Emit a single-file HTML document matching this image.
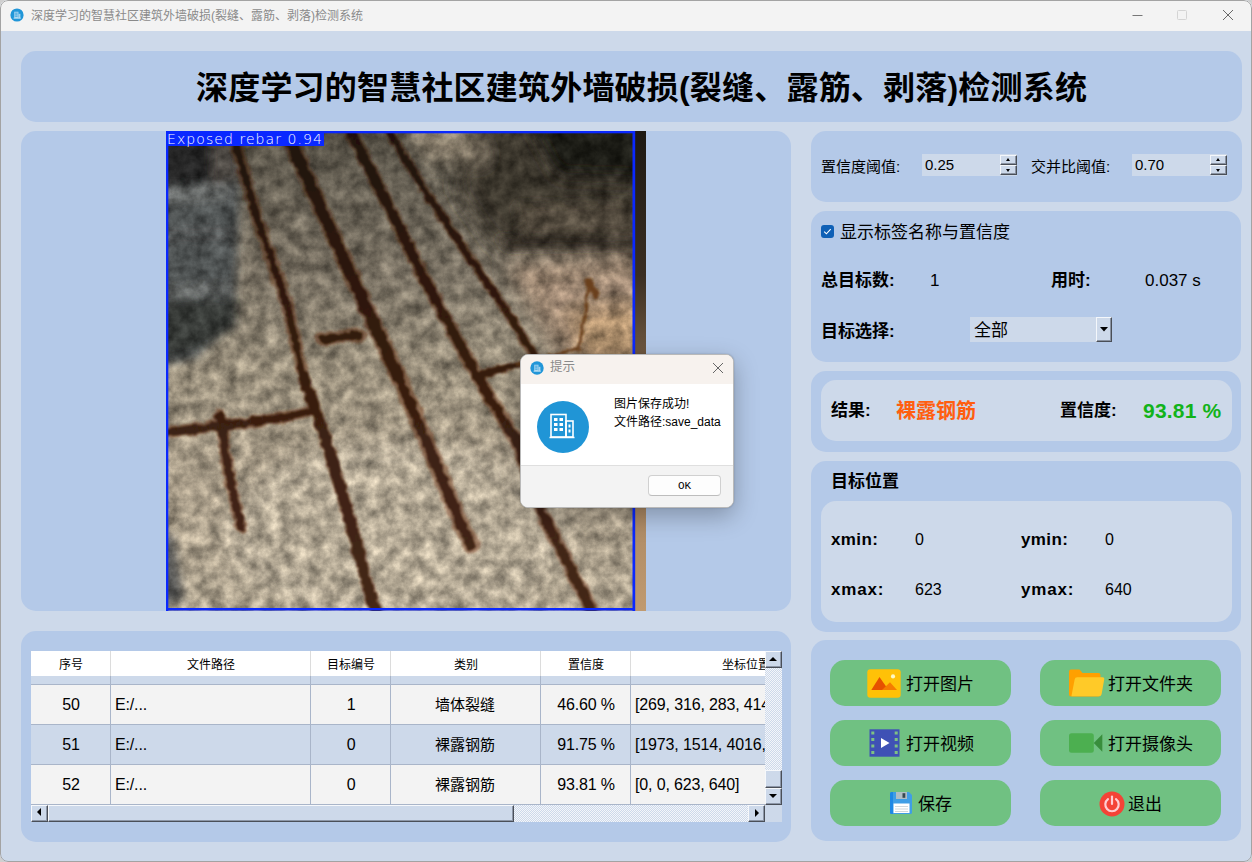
<!DOCTYPE html>
<html lang="zh-CN">
<head>
<meta charset="utf-8">
<title>深度学习的智慧社区建筑外墙破损(裂缝、露筋、剥落)检测系统</title>
<style>
*{box-sizing:border-box;margin:0;padding:0}
html,body{width:1252px;height:862px;overflow:hidden;background:#cfcfcf}
body{font-family:"Liberation Sans","Noto Sans CJK SC",sans-serif;color:#000;position:relative}
.abs{position:absolute}
#win{position:absolute;left:0;top:0;width:1252px;height:862px;background:#cdd9ea;border-radius:8px;overflow:hidden}
#winb{position:absolute;left:0;top:0;width:1252px;height:862px;border:1px solid #a3a3a3;border-radius:8px;z-index:50}
#tbar{position:absolute;left:0;top:0;width:1252px;height:31px;background:#f3f3f3}
#tbar .ttl{position:absolute;left:31px;top:1px;height:30px;line-height:30px;font-size:12px;color:#8a8a8a;white-space:nowrap}
.panel{position:absolute;background:#b4c9e8;border-radius:15px}
.inner{position:absolute;background:#cdd9ea;border-radius:15px}
.t{position:absolute;white-space:nowrap;line-height:1}
.b{font-weight:bold}

.spin{position:absolute;width:95px;height:22px;background:#cdd9ea}
.spin span{position:absolute;left:3px;top:0;line-height:22px;font-size:15px}
.spin i{position:absolute;left:78px;width:17px;height:10px;background:#cdd9ea;border-left:1px solid #f4f7fb;border-top:1px solid #f4f7fb;border-right:1px solid #4a4f57;border-bottom:1px solid #4a4f57;box-shadow:inset -1px -1px 0 #8a93a2}
.spin i.up{top:1px}.spin i.dn{top:11px}
.spin i.up:after{content:"";position:absolute;left:5px;top:2px;border:2px solid transparent;border-top:0;border-bottom:3px solid #000}
.spin i.dn:after{content:"";position:absolute;left:5px;top:3px;border:2px solid transparent;border-bottom:0;border-top:3px solid #000}
.combo{position:absolute;width:142px;height:25px;background:#cdd9ea}
.combo span{position:absolute;left:4px;top:1px;line-height:25px;font-size:17px}
.combo i{position:absolute;left:126px;top:0;width:16px;height:25px;background:#cdd9ea;border-left:1px solid #f4f7fb;border-top:1px solid #f4f7fb;border-right:1px solid #4a4f57;border-bottom:1px solid #4a4f57;box-shadow:inset -1px -1px 0 #8a93a2}
.combo i:after{content:"";position:absolute;left:3px;top:9px;width:8px;height:4.5px;background:#000;clip-path:polygon(0 0,100% 0,50% 100%)}
.btn{position:absolute;width:181px;height:46px;border-radius:15px;background:#70c182}

.th{position:absolute;top:2px;height:25px;line-height:25px;font-size:12px;text-align:center;white-space:nowrap}
.tr{position:absolute;left:0;width:734px;height:40px;border-bottom:1px solid #a9b5c9}
.tr span{position:absolute;top:0;height:39px;line-height:39px;font-size:16px;letter-spacing:-0.15px;white-space:nowrap;overflow:hidden}
.dots{background-color:#e4e9f1;background-image:conic-gradient(#cdd9ea 25%,#f4f6fa 0 50%,#cdd9ea 0 75%,#f4f6fa 0);background-size:2px 2px}
.sbb{position:absolute;width:17px;height:17px;background:#cdd9ea;border-left:1px solid #f6f8fb;border-top:1px solid #f6f8fb;border-right:1px solid #4a4f58;border-bottom:1px solid #4a4f58;box-shadow:inset -1px -1px 0 #8d97a8}
.sbb b{position:absolute;width:0;height:0;border:4px solid transparent}
.sbb .au{left:3px;top:5px;border-top:0;border-bottom:4px solid #000}
.sbb .ad{left:3px;top:5px;border-bottom:0;border-top:4px solid #000}
.sbb .al{left:5px;top:2px;border-left:0;border-right:4px solid #000}
.sbb .ar{left:6px;top:3px;border-right:0;border-left:4px solid #000}
.tr span.cj{font-size:15px;letter-spacing:0;padding-right:2px}
</style>
</head>
<body>
<div id="win">
  <div id="winb"></div>
  <div id="tbar">
    <svg class="abs" style="left:10px;top:8px" width="14" height="14" viewBox="0 0 14 14"><circle cx="7" cy="7" r="6.6" fill="#2196d8"/><rect x="4.200" y="3.700" width="4.300" height="6.300" fill="#9fd2ef"/><rect x="8.500" y="5.800" width="1.900" height="4.200" fill="#9fd2ef"/><path d="M5.200 5.200h2.300M5.200 6.800h2.300M5.200 8.300h2.300" stroke="#2196d8" stroke-width="0.700"/><path d="M3.600 10.200h7.200" stroke="#e8f4fb" stroke-width="0.800"/></svg>
    <div class="ttl">深度学习的智慧社区建筑外墙破损(裂缝、露筋、剥落)检测系统</div>
    <svg class="abs" style="left:1121px;top:0px" width="130" height="30" viewBox="0 0 130 30"><path d="M11.5 15.5h10" stroke="#777" stroke-width="1" fill="none"/><rect x="56.500" y="10.500" width="9" height="9" rx="1" fill="none" stroke="#d4d4d4" stroke-width="1"/><path d="M102 10l10 10M112 10l-10 10" stroke="#686868" stroke-width="1" fill="none"/></svg>
  </div>

  <!-- title panel -->
  <div class="panel" style="left:21px;top:51px;width:1221px;height:71px"></div>
  <div class="t b" id="maintitle" style="left:196px;top:51px;height:71px;line-height:75px;font-size:32px;letter-spacing:0.2px">深度学习的智慧社区建筑外墙破损(裂缝、露筋、剥落)检测系统</div>

  <!-- image panel -->
  <div class="panel" id="imgpanel" style="left:21px;top:131px;width:770px;height:480px"></div>

  <!-- photo -->
  <div id="photo" class="abs" style="left:166px;top:131px;width:480px;height:480px;background:#8d857a;overflow:hidden">
  <!--PHOTO--><svg class="abs" style="left:0;top:0" width="480" height="480" viewBox="0 0 480 480">
<defs>
<linearGradient id="vg" x1="0" y1="0" x2="0" y2="1">
 <stop offset="0" stop-color="#575247"/><stop offset="0.12" stop-color="#645e52"/><stop offset="0.3" stop-color="#797163"/><stop offset="0.5" stop-color="#988e7b"/><stop offset="0.75" stop-color="#a99d89"/><stop offset="1" stop-color="#ada28e"/>
</linearGradient>
<linearGradient id="rb" gradientUnits="userSpaceOnUse" x1="0" y1="0" x2="0" y2="480">
 <stop offset="0" stop-color="#1f1109"/><stop offset="0.4" stop-color="#311a0e"/><stop offset="0.7" stop-color="#3e2213"/><stop offset="1" stop-color="#442718"/>
</linearGradient>
<linearGradient id="rh" gradientUnits="userSpaceOnUse" x1="0" y1="0" x2="0" y2="480">
 <stop offset="0" stop-color="#4a2c18"/><stop offset="0.5" stop-color="#744428"/><stop offset="1" stop-color="#86553a"/>
</linearGradient>
<linearGradient id="rs" x1="0" y1="0" x2="0" y2="1">
 <stop offset="0" stop-color="#1d1812"/><stop offset="0.3" stop-color="#3a2e22"/><stop offset="0.6" stop-color="#9a7a58"/><stop offset="1" stop-color="#c09a70"/>
</linearGradient>
<filter id="bl" x="-20%" y="-20%" width="140%" height="140%"><feGaussianBlur stdDeviation="9"/></filter>
<filter id="bs" x="-20%" y="-20%" width="140%" height="140%"><feGaussianBlur stdDeviation="4"/></filter>
<filter id="rough" x="-10%" y="-10%" width="120%" height="120%"><feTurbulence type="fractalNoise" baseFrequency="0.12" numOctaves="2" seed="3" result="n"/><feDisplacementMap in="SourceGraphic" in2="n" scale="6" xChannelSelector="R" yChannelSelector="G"/><feGaussianBlur stdDeviation="0.8"/></filter>
<filter id="tex" x="0" y="0" width="100%" height="100%" color-interpolation-filters="sRGB">
 <feTurbulence type="fractalNoise" baseFrequency="0.07" numOctaves="5" seed="8" result="t"/>
 <feColorMatrix in="t" type="matrix" values="0.8 0 0 0 0.1  0.8 0 0 0 0.1  0.8 0 0 0 0.1  0 0 0 0 1" result="g"/>
 <feComposite in="SourceGraphic" in2="g" operator="arithmetic" k1="1" k2="0.5" k3="0.12" k4="-0.06"/>
</filter>
</defs>
<g filter="url(#tex)">
<rect width="480" height="480" fill="url(#vg)"/>
<g filter="url(#bl)">
 <ellipse cx="230" cy="400" rx="170" ry="90" fill="#b3a894"/>
 <!-- top right dark -->
 <path d="M300 -30L520 -30L520 122L400 118L330 116L290 60Z" fill="#3d372e"/>
 <path d="M350 -30L520 -30L520 50L390 46Z" fill="#1f1d19"/>
 <path d="M230 -20L300 -20L320 30L260 30Z" fill="#857a69"/>
 <!-- right mid lighter smooth -->
 <path d="M340 134L500 122L500 240L400 240Z" fill="#9a8470"/>
 <path d="M400 180L500 170L500 240L420 240Z" fill="#aa8c6a"/>
</g>
<g filter="url(#bs)">
 <path d="M350 74L480 70L480 102L356 104Z" fill="#4f463b"/>
 <path d="M330 106L480 104L480 116L340 118Z" fill="#362e26"/>
 <!-- top left dark -->
 <path d="M-30 -10L70 -10L74 60L70 150L66 195L30 228L-30 240Z" fill="#4e5151"/>
 <path d="M-30 -10L46 -10L48 52L-30 56Z" fill="#262626"/>
 <path d="M44 -10L70 -10L72 52L46 54Z" fill="#48453f"/>
 <path d="M-20 58L68 52L68 68L-20 76Z" fill="#686b69"/>
 <path d="M-20 102L66 98L66 106L-20 110Z" fill="#5e6060"/>
 <path d="M-20 156L64 150L64 162L-20 168Z" fill="#646665"/>
 <path d="M-20 170L72 166L70 196L28 222L-20 232Z" fill="#383a39"/>
 <path d="M-20 395L8 405L18 470L-20 480Z" fill="#5a5a58"/>
</g>
</g>
<g filter="url(#rough)" fill="none" stroke-linecap="round" stroke-linejoin="round">
 <g stroke="url(#rh)" opacity="0.6">
  <path d="M70 14L92 90L120 170L137 244L157 300L184 389L210 484" stroke-width="13"/>
  <path d="M122 4L160 89L193 161L232 245L266 323L293 389L305 414" stroke-width="17"/>
  <path d="M182 -4L221 72L257 145L299 223L321 262L352 312L374 378L427 482" stroke-width="14"/>
  <path d="M220 -4L260 61L299 120L332 167L360 211L372 230" stroke-width="10"/>
  <path d="M-4 302L52 295L110 288L150 279" stroke-width="12"/>
  <path d="M54 284L64 350L75 396" stroke-width="12"/>
  <path d="M156 208L194 204" stroke-width="14"/>
  <path d="M308 245L352 234" stroke-width="9"/>
 </g>
 <g stroke="url(#rb)">
  <path d="M70 14L92 90L120 170L137 244" stroke-width="7.200"/>
  <path d="M137 244L157 300L184 389L210 484" stroke-width="10.700"/>
  <path d="M122 4L160 89L193 161L232 245" stroke-width="11.700"/>
  <path d="M232 245L266 323L293 389L305 414" stroke-width="10.200"/>
  <path d="M182 -4L221 72L257 145L299 223L321 262L352 312L374 378L427 482" stroke-width="9.700"/>
  <path d="M220 -4L260 61L299 120L332 167L360 211L372 230" stroke-width="6.700"/>
  <path d="M-4 302L52 295L110 288L150 279" stroke-width="8.700"/>
  <path d="M54 284L64 350L75 396" stroke-width="8.700"/>
  <path d="M158 208L192 204" stroke-width="9.200"/>
  <path d="M308 245L352 234" stroke-width="7.200"/>
 </g>
 <g stroke="#6a3f1c">
  <path d="M422 149L419 184L413 217" stroke-width="3"/>
  <path d="M352 234L413 217" stroke-width="3"/>
  <path d="M423 150L429 164" stroke-width="7"/>
 </g>
</g>
<!-- right strip beyond box -->
<rect x="469" y="0" width="11" height="480" fill="url(#rs)"/>
<rect x="466.500" y="0" width="2.700" height="480" fill="#0a28ff"/>
<rect x="0" y="0" width="2.300" height="480" fill="#0a28ff"/>
<rect x="0" y="0" width="469" height="2.300" fill="#0a28ff"/>
<rect x="0" y="477" width="469" height="2.500" fill="#0a28ff"/>
<rect x="0" y="0" width="158" height="15" fill="#0a28ff"/>
<text x="1" y="12.500" font-family="'DejaVu Sans','Liberation Sans',sans-serif" font-weight="200" font-size="14" fill="#fff" textLength="155" lengthAdjust="spacing">Exposed rebar 0.94</text>
</svg>
<!--/PHOTO-->
  </div>

  <!-- dialog -->
  <div id="dlg" class="abs" style="left:520px;top:354px;width:214px;height:154px;border-radius:8px;background:#fff;border:1px solid #b9b9b9;box-shadow:0 8px 24px rgba(0,0,0,0.28),0 0 2px rgba(0,0,0,0.2);overflow:hidden">
    <div class="abs" style="left:0;top:0;width:212px;height:29px;background:#f7f2ee"></div>
    <svg class="abs" style="left:9px;top:6px" width="14" height="14" viewBox="0 0 14 14"><circle cx="7" cy="7" r="6.700" fill="#2196d8"/><rect x="4.200" y="3.700" width="4.300" height="6.300" fill="#9fd2ef"/><rect x="8.500" y="5.800" width="1.900" height="4.200" fill="#9fd2ef"/><path d="M5.200 5.200h2.300M5.200 6.800h2.300M5.200 8.300h2.300" stroke="#2196d8" stroke-width="0.700"/><path d="M3.600 10.200h7.200" stroke="#e8f4fb" stroke-width="0.800"/></svg>
    <div class="t" style="left:29px;top:6px;font-size:12.500px;color:#8a8a8a">提示</div>
    <svg class="abs" style="left:191px;top:7px" width="12" height="12" viewBox="0 0 12 12"><path d="M1 1l10 10M11 1L1 11" stroke="#666" stroke-width="1" fill="none"/></svg>
    <svg class="abs" style="left:15px;top:45px" width="54" height="54" viewBox="0 0 54 54"><circle cx="27" cy="27" r="26" fill="#2095d6"/><g transform="translate(-1,-1)"><path d="M14.500 38.500h25" stroke="#fff" stroke-width="1.600"/><rect x="16" y="15.500" width="15" height="22.500" fill="none" stroke="#fff" stroke-width="1.600"/><rect x="31" y="22" width="7" height="16" fill="none" stroke="#fff" stroke-width="1.600"/><g fill="#fff"><rect x="19" y="19" width="3.500" height="3"/><rect x="24.500" y="19" width="3.500" height="3"/><rect x="19" y="24" width="3.500" height="3"/><rect x="24.500" y="24" width="3.500" height="3"/><rect x="19" y="29" width="3.500" height="3"/><rect x="24.500" y="29" width="3.500" height="3"/><rect x="33.500" y="25.500" width="2" height="3"/><rect x="33.500" y="30.500" width="2" height="3"/></g></g></svg>
    <div class="t" style="left:93px;top:41px;font-size:12px;line-height:17.500px">图片保存成功!<br>文件路径:save_data</div>
    <div class="abs" style="left:0;top:110px;width:212px;height:44px;background:#f3f3f3;border-top:1px solid #dfdfdf"></div>
    <div class="abs" style="left:127px;top:120px;width:73px;height:21px;background:#fdfdfd;border:1px solid #d0d0d0;border-bottom-color:#bdbdbd;border-radius:4px;text-align:center;font-family:'Liberation Mono','Noto Serif CJK SC',monospace;font-size:11px;line-height:20px">OK</div>
  </div>

  <!-- table panel -->
  <div class="panel" id="tblpanel" style="left:21px;top:631px;width:770px;height:211px"></div>

  <!-- table -->
  <div id="tbl" class="abs" style="left:31px;top:651px;width:751px;height:171px;background:#cdd9ea;overflow:hidden">
   <div class="abs" style="left:0;top:0;width:734px;height:25px;background:#fff"></div>
   <div class="th" style="left:0px;width:80px">序号</div>
   <div class="th" style="left:80px;width:200px">文件路径</div>
   <div class="th" style="left:280px;width:80px">目标编号</div>
   <div class="th" style="left:360px;width:150px">类别</div>
   <div class="th" style="left:510px;width:90px">置信度</div>
   <div class="th" style="left:600px;width:230px">坐标位置</div>
   <div class="abs" style="left:0;top:25px;width:734px;height:9px;background:#cdd9ea;border-bottom:1px solid #a9b5c9"></div>
   <div class="tr" style="top:34px;background:#f3f3f3"><span style="left:0px;width:80px;text-align:center;">50</span><span style="left:80px;width:200px;text-align:left;padding-left:4px;">E:/...</span><span style="left:280px;width:80px;text-align:center;">1</span><span class="cj" style="left:360px;width:150px;text-align:center;">墙体裂缝</span><span style="left:510px;width:90px;text-align:center;">46.60 %</span><span style="left:600px;width:134px;text-align:left;padding-left:4px;">[269, 316, 283, 414]</span></div>
   <div class="tr" style="top:74px;background:#cdd9ea"><span style="left:0px;width:80px;text-align:center;">51</span><span style="left:80px;width:200px;text-align:left;padding-left:4px;">E:/...</span><span style="left:280px;width:80px;text-align:center;">0</span><span class="cj" style="left:360px;width:150px;text-align:center;">裸露钢筋</span><span style="left:510px;width:90px;text-align:center;">91.75 %</span><span style="left:600px;width:134px;text-align:left;padding-left:4px;">[1973, 1514, 4016, 2874]</span></div>
   <div class="tr" style="top:114px;background:#f3f3f3"><span style="left:0px;width:80px;text-align:center;">52</span><span style="left:80px;width:200px;text-align:left;padding-left:4px;">E:/...</span><span style="left:280px;width:80px;text-align:center;">0</span><span class="cj" style="left:360px;width:150px;text-align:center;">裸露钢筋</span><span style="left:510px;width:90px;text-align:center;">93.81 %</span><span style="left:600px;width:134px;text-align:left;padding-left:4px;">[0, 0, 623, 640]</span></div>
   <div class="abs" style="left:79px;top:0;width:1px;height:25px;background:#dcdcdc"></div>
   <div class="abs" style="left:79px;top:25px;width:1px;height:129px;background:#a9b5c9"></div>
   <div class="abs" style="left:279px;top:0;width:1px;height:25px;background:#dcdcdc"></div>
   <div class="abs" style="left:279px;top:25px;width:1px;height:129px;background:#a9b5c9"></div>
   <div class="abs" style="left:359px;top:0;width:1px;height:25px;background:#dcdcdc"></div>
   <div class="abs" style="left:359px;top:25px;width:1px;height:129px;background:#a9b5c9"></div>
   <div class="abs" style="left:509px;top:0;width:1px;height:25px;background:#dcdcdc"></div>
   <div class="abs" style="left:509px;top:25px;width:1px;height:129px;background:#a9b5c9"></div>
   <div class="abs" style="left:599px;top:0;width:1px;height:25px;background:#dcdcdc"></div>
   <div class="abs" style="left:599px;top:25px;width:1px;height:129px;background:#a9b5c9"></div>
   <div class="abs dots" style="left:734px;top:0;width:17px;height:154px"></div>
   <div class="sbb" style="left:734px;top:0"><b class="au"></b></div>
   <div class="sbb" style="left:734px;top:119px;height:18px"></div>
   <div class="sbb" style="left:734px;top:137px"><b class="ad"></b></div>
   <div class="abs dots" style="left:0;top:154px;width:734px;height:17px"></div>
   <div class="sbb" style="left:0;top:154px"><b class="al"></b></div>
   <div class="sbb" style="left:17px;top:154px;width:466px"></div>
   <div class="sbb" style="left:717px;top:154px"><b class="ar"></b></div>
  </div>

  <!-- right panels -->
  <div class="panel" style="left:811px;top:131px;width:431px;height:71px"></div>
  <div class="panel" style="left:811px;top:211px;width:430px;height:151px"></div>
  <div class="panel" style="left:811px;top:371px;width:430px;height:81px"></div>
  <div class="panel" style="left:811px;top:461px;width:430px;height:171px"></div>
  <div class="panel" style="left:811px;top:640px;width:430px;height:201px"></div>

  <!-- thresholds -->
  <div class="t" style="left:821px;top:159px;font-size:15px">置信度阈值:</div>
  <div class="spin" style="left:922px;top:154px"><span>0.25</span><i class="up"></i><i class="dn"></i></div>
  <div class="t" style="left:1031px;top:159px;font-size:15px">交并比阈值:</div>
  <div class="spin" style="left:1132px;top:154px"><span>0.70</span><i class="up"></i><i class="dn"></i></div>

  <!-- stats -->
  <div class="abs" style="left:821px;top:225px;width:13px;height:13px;background:#0f60b6;border-radius:3px"><svg width="13" height="13" viewBox="0 0 13 13" style="display:block"><path d="M3.2 6.6l2.2 2.2 4.3-4.6" fill="none" stroke="#fff" stroke-width="1.1"/></svg></div>
  <div class="t" style="left:840px;top:224px;font-size:17px">显示标签名称与置信度</div>
  <div class="t b" style="left:821px;top:272px;font-size:17px">总目标数:</div>
  <div class="t" style="left:930px;top:272px;font-size:17px">1</div>
  <div class="t b" style="left:1051px;top:272px;font-size:17px">用时:</div>
  <div class="t" style="left:1145px;top:272px;font-size:17px">0.037 s</div>
  <div class="t b" style="left:821px;top:323px;font-size:17px">目标选择:</div>
  <div class="combo" style="left:970px;top:317px"><span>全部</span><i></i></div>

  <!-- result -->
  <div class="inner" style="left:821px;top:380px;width:411px;height:61px"></div>
  <div class="t b" style="left:831px;top:402px;font-size:17px">结果:</div>
  <div class="t b" style="left:896px;top:401px;font-size:20px;color:#ff5e10">裸露钢筋</div>
  <div class="t b" style="left:1060px;top:402px;font-size:17px">置信度:</div>
  <div class="t b" style="left:1143px;top:400px;font-size:21px;letter-spacing:0.2px;color:#12b31a">93.81 %</div>

  <!-- position -->
  <div class="t b" style="left:831px;top:473px;font-size:17px">目标位置</div>
  <div class="inner" style="left:821px;top:501px;width:411px;height:121px"></div>
  <div class="t b" style="left:831px;top:531px;font-size:17px;letter-spacing:0.4px">xmin:</div>
  <div class="t" style="left:915px;top:532px;font-size:16px">0</div>
  <div class="t b" style="left:1021px;top:531px;font-size:17px;letter-spacing:0.4px">ymin:</div>
  <div class="t" style="left:1105px;top:532px;font-size:16px">0</div>
  <div class="t b" style="left:831px;top:581px;font-size:17px;letter-spacing:0.8px">xmax:</div>
  <div class="t" style="left:915px;top:582px;font-size:16px">623</div>
  <div class="t b" style="left:1021px;top:581px;font-size:17px;letter-spacing:0.8px">ymax:</div>
  <div class="t" style="left:1105px;top:582px;font-size:16px">640</div>

  <!-- buttons -->
  <div class="btn" style="left:830px;top:660px"></div>
  <div class="btn" style="left:1040px;top:660px"></div>
  <div class="btn" style="left:830px;top:720px"></div>
  <div class="btn" style="left:1040px;top:720px"></div>
  <div class="btn" style="left:830px;top:780px"></div>
  <div class="btn" style="left:1040px;top:780px"></div>
  <div class="t" style="left:906px;top:676px;font-size:17px">打开图片</div>
  <div class="t" style="left:1108px;top:676px;font-size:17px">打开文件夹</div>
  <div class="t" style="left:906px;top:736px;font-size:17px">打开视频</div>
  <div class="t" style="left:1108px;top:736px;font-size:17px">打开摄像头</div>
  <div class="t" style="left:918px;top:796px;font-size:17px">保存</div>
  <div class="t" style="left:1128px;top:796px;font-size:17px">退出</div>
  <!-- icons -->
  <svg class="abs" style="left:867px;top:669px" width="34" height="29" viewBox="0 0 34 29"><rect x="0.300" y="0.300" width="33.400" height="28.400" rx="3" fill="#ffc107"/><path d="M4.300 21l8.200-13 9 13z" fill="#e65100"/><path d="M15 21l8-7.800 7 7.800z" fill="#f57c00"/><circle cx="26" cy="7.400" r="2.100" fill="#fff9c4"/></svg>
  <svg class="abs" style="left:1068.300px;top:668px" width="37" height="29" viewBox="0 0 37 29"><path d="M1 3.500a2 2 0 0 1 2-2h8.500l3 3.500h16a2 2 0 0 1 2 2v19.500a2 2 0 0 1-2 2h-27.500a2 2 0 0 1-2-2z" fill="#ffa000"/><path d="M6.700 11.300a2.500 2.500 0 0 1 2.400-2h25.300a1.800 1.800 0 0 1 1.800 2.200l-2.600 14.700a2.500 2.500 0 0 1-2.400 2h-27.800z" fill="#ffca28"/></svg>
  <svg class="abs" style="left:868.500px;top:729px" width="31" height="28" viewBox="0 0 31 28"><rect x="0.500" y="0.300" width="30" height="27.400" fill="#3f51b5"/><g fill="#7fc283"><rect x="2.300" y="2.500" width="3" height="3"/><rect x="2.300" y="9" width="3" height="3"/><rect x="2.300" y="15.500" width="3" height="3"/><rect x="2.300" y="22" width="3" height="3"/><rect x="25.700" y="2.500" width="3" height="3"/><rect x="25.700" y="9" width="3" height="3"/><rect x="25.700" y="15.500" width="3" height="3"/><rect x="25.700" y="22" width="3" height="3"/></g><path d="M12 9l8.500 5-8.500 5z" fill="#fff"/></svg>
  <svg class="abs" style="left:1068.300px;top:732px" width="36" height="22" viewBox="0 0 36 22"><rect x="1" y="1.300" width="24.800" height="19.500" rx="2.500" fill="#4caf50"/><path d="M25.800 11l8.500-8.800v17.600z" fill="#388e3c"/></svg>
  <svg class="abs" style="left:889px;top:791px" width="24" height="24" viewBox="0 0 24 24"><path d="M1 2.500a1.500 1.500 0 0 1 1.500-1.500h17.500l3 3v17.500a1.500 1.500 0 0 1-1.500 1.500h-19a1.500 1.500 0 0 1-1.500-1.500z" fill="#3f9ee6"/><path d="M1 2.500a1.500 1.500 0 0 1 1.500-1.500h1.500v22h-1.500a1.500 1.500 0 0 1-1.500-1.500z" fill="#1e88e5"/><rect x="7" y="1" width="11" height="7" fill="#b0bec5"/><rect x="13.500" y="2.200" width="2.800" height="4.600" fill="#37474f"/><rect x="4.500" y="12.500" width="16" height="9.500" fill="#fff"/><path d="M6 15.500h13M6 18h13M6 20.500h13" stroke="#cfd8dc" stroke-width="1"/></svg>
  <svg class="abs" style="left:1099px;top:791px" width="26" height="26" viewBox="0 0 26 26"><circle cx="13" cy="13" r="12.500" fill="#f44336"/><path d="M9 8.200a6.700 6.700 0 1 0 8 0" fill="none" stroke="#ffcdd2" stroke-width="2.200" stroke-linecap="round"/><path d="M13 5.500v7.500" stroke="#ffcdd2" stroke-width="2.200" stroke-linecap="round"/></svg>
</div>
</body>
</html>
